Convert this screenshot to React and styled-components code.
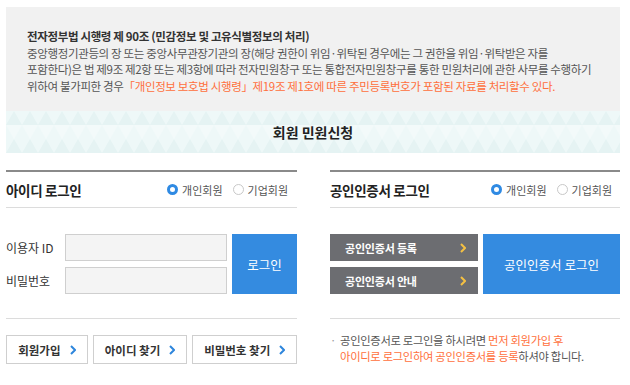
import React from 'react';
import styled, { createGlobalStyle } from 'styled-components';

const colors = {
  body: '#444',
  dark: '#222',
  orange: '#ff6f3c',
  blue: '#348be0',
  gray: '#6c6d71',
  yellow: '#f4c043',
  line: '#dcdcdc',
};

const GlobalStyle = createGlobalStyle`
  html, body {
    margin: 0;
    padding: 0;
    background: #fff;
  }
  body {
    font-family: "Noto Sans CJK KR", "Noto Sans", sans-serif;
    color: ${colors.body};
  }
`;

const Page = styled.div`
  width: 614px;
  padding: 7px 0 0 6px;
`;

const Notice = styled.div`
  background: #f1f1f1;
  height: 104px;
  box-sizing: border-box;
  padding: 21px 0 0 21px;
  font-size: 11.5px;
  line-height: 16.5px;
  letter-spacing: -0.35px;
  color: #555;
`;

const NoticeTitle = styled.div`
  font-weight: bold;
  color: #333;
`;

const Orange = styled.span`
  color: ${colors.orange};
`;

const Band = styled.div`
  height: 42px;
  display: flex;
  align-items: center;
  justify-content: center;
  background-color: #eef8f8;
  background-image: url("data:image/svg+xml,%3Csvg xmlns='http://www.w3.org/2000/svg' width='16' height='28'%3E%3Cpath d='M0 14 L8 0 L16 14 Z' fill='%23e5f3f3'/%3E%3Cpath d='M0 14 L8 28 L16 14 Z' fill='%23f3fafa'/%3E%3C/svg%3E");
  background-size: 16px 28px;
  font-size: 14px;
  font-weight: bold;
  color: ${colors.dark};
`;

const Columns = styled.div`
  display: grid;
  grid-template-columns: 291px 290px;
  column-gap: 33px;
  margin-top: 17px;
`;

const Panel = styled.section`
  border-top: 2px solid #8a8a8a;
`;

const PanelHead = styled.div`
  height: 35px;
  display: flex;
  align-items: center;
  justify-content: space-between;
  padding-right: ${(p) => p.$pr || 9}px;
  border-bottom: 1px solid ${colors.line};
`;

const PanelTitle = styled.h3`
  margin: 0;
  font-size: 13.5px;
  font-weight: bold;
  color: ${colors.dark};
  letter-spacing: -0.3px;
`;

const Radios = styled.div`
  display: flex;
  align-items: center;
  gap: 10px;
  font-size: 11px;
  color: #555;
`;

const RadioItem = styled.label`
  display: flex;
  align-items: center;
  gap: 4px;
`;

const RadioDot = styled.span`
  width: 11px;
  height: 11px;
  border-radius: 50%;
  box-sizing: border-box;
  border: ${(p) => (p.$on ? `3.5px solid #2f8ae3` : '1px solid #c8c8c8')};
  background: #fff;
`;

const FormArea = styled.div`
  height: 111px;
  display: flex;
  align-items: flex-start;
  padding-top: 26px;
  box-sizing: border-box;
  border-bottom: 1px solid ${colors.line};
`;

const Fields = styled.div`
  display: flex;
  flex-direction: column;
  gap: 6px;
`;

const FieldRow = styled.div`
  display: flex;
  align-items: center;
`;

const FieldLabel = styled.span`
  width: 59px;
  font-size: 12px;
  color: #333;
`;

const Input = styled.div`
  width: 162px;
  height: 27px;
  box-sizing: border-box;
  border: 1px solid #cfcfcf;
  background: #f4f4f4;
`;

const BlueButton = styled.button`
  margin-left: ${(p) => p.$ml}px;
  width: ${(p) => p.$w}px;
  height: 60px;
  border: 0;
  background: ${colors.blue};
  color: #fff;
  font-family: inherit;
  font-size: 12.5px;
  padding: 0;
`;

const GrayButtons = styled.div`
  display: flex;
  flex-direction: column;
  gap: 6px;
`;

const GrayButton = styled.button`
  width: 148px;
  height: 27px;
  border: 0;
  background: ${colors.gray};
  color: #fff;
  font-family: inherit;
  font-size: 11px;
  font-weight: bold;
  display: flex;
  align-items: center;
  justify-content: space-between;
  padding: 0 12px 0 15px;
  letter-spacing: -0.2px;
`;

const LinkRow = styled.div`
  display: flex;
  gap: 5px;
  margin-top: 16px;
`;

const LinkButton = styled.button`
  width: ${(p) => p.$w}px;
  height: 29px;
  box-sizing: border-box;
  border: 1px solid #cfcfcf;
  background: #fff;
  font-family: inherit;
  font-size: 11.5px;
  font-weight: bold;
  color: #333;
  display: flex;
  align-items: center;
  justify-content: center;
  gap: 9px;
  padding: 0;
`;

const Note = styled.p`
  margin: 13px 0 0 0;
  display: flex;
  gap: 4px;
  font-size: 11.3px;
  line-height: 16px;
  color: #555;
  letter-spacing: -0.3px;
`;

const Bullet = styled.span`
  color: #999;
`;

function Chevron({ color }) {
  return (
    <svg width="6" height="10" viewBox="0 0 6 10">
      <polyline points="1,1 5,5 1,9" fill="none" stroke={color} strokeWidth="2" />
    </svg>
  );
}

function RadioGroup() {
  return (
    <Radios>
      <RadioItem><RadioDot $on />개인회원</RadioItem>
      <RadioItem><RadioDot />기업회원</RadioItem>
    </Radios>
  );
}

export default function App() {
  return (
    <Page>
      <GlobalStyle />
      <Notice>
        <NoticeTitle>전자정부법 시행령 제 90조 (민감정보 및 고유식별정보의 처리)</NoticeTitle>
        <div>중앙행정기관등의 장 또는 중앙사무관장기관의 장(해당 권한이 위임·위탁된 경우에는 그 권한을 위임·위탁받은 자를</div>
        <div>포함한다)은 법 제9조 제2항 또는 제3항에 따라 전자민원창구 또는 통합전자민원창구를 통한 민원처리에 관한 사무를 수행하기</div>
        <div>
          위하여 불가피한 경우<Orange>「개인정보 보호법 시행령」제19조 제1호에 따른 주민등록번호가 포함된 자료를 처리할수 있다.</Orange>
        </div>
      </Notice>
      <Band>회원 민원신청</Band>
      <Columns>
        <Panel>
          <PanelHead $pr={9}>
            <PanelTitle>아이디 로그인</PanelTitle>
            <RadioGroup />
          </PanelHead>
          <FormArea>
            <Fields>
              <FieldRow><FieldLabel>이용자 ID</FieldLabel><Input /></FieldRow>
              <FieldRow><FieldLabel>비밀번호</FieldLabel><Input /></FieldRow>
            </Fields>
            <BlueButton $ml={5} $w={65}>로그인</BlueButton>
          </FormArea>
          <LinkRow>
            <LinkButton $w={82}>회원가입 <Chevron color="#2e86dc" /></LinkButton>
            <LinkButton $w={95}>아이디 찾기 <Chevron color="#2e86dc" /></LinkButton>
            <LinkButton $w={105}>비밀번호 찾기 <Chevron color="#2e86dc" /></LinkButton>
          </LinkRow>
        </Panel>
        <Panel>
          <PanelHead $pr={8}>
            <PanelTitle>공인인증서 로그인</PanelTitle>
            <RadioGroup />
          </PanelHead>
          <FormArea>
            <GrayButtons>
              <GrayButton>공인인증서 등록 <Chevron color={colors.yellow} /></GrayButton>
              <GrayButton>공인인증서 안내 <Chevron color={colors.yellow} /></GrayButton>
            </GrayButtons>
            <BlueButton $ml={5} $w={137}>공인인증서 로그인</BlueButton>
          </FormArea>
          <Note>
            <Bullet>·</Bullet>
            <span>
              공인인증서로 로그인을 하시려면 <Orange>먼저 회원가입 후</Orange>
              <br />
              <Orange>아이디로 로그인하여 공인인증서를 등록</Orange>하셔야 합니다.
            </span>
          </Note>
        </Panel>
      </Columns>
    </Page>
  );
}
